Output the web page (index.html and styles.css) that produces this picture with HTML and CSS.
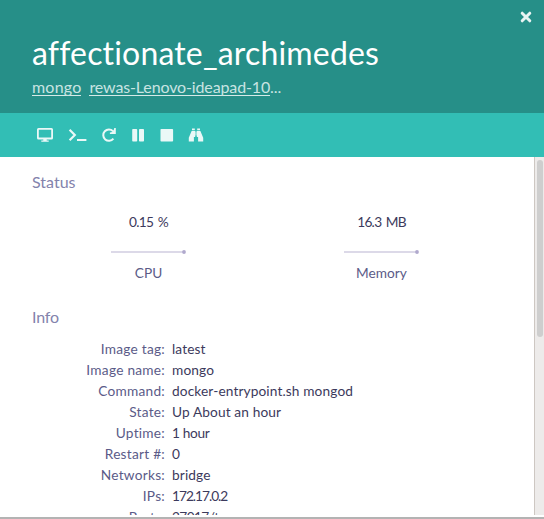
FILE: index.html
```html
<!DOCTYPE html>
<html lang="en">
<head>
<meta charset="utf-8">
<title>affectionate_archimedes</title>
<link rel="stylesheet" href="styles.css">
</head>
<body>
<div class="panel">
  <header class="header">
    <svg class="close" viewBox="0 0 12 12"><path d="M2.2 2.2l7.6 7.6M9.8 2.2l-7.6 7.6"/></svg>
    <h1 class="title">affectionate_archimedes</h1>
    <div class="parents"><a class="mongo">mongo</a><span class="host"><a>rewas-Lenovo-ideapad-10</a>...</span></div>
  </header>
  <nav class="controls">
    <svg class="icon monitor" width="18" height="16" viewBox="0 0 18 16"><rect x="1.9" y="1.9" width="14.2" height="9.6" rx=".6" fill="none" stroke="currentColor" stroke-width="1.8"/><path d="M7.3 12h3.4v1.5h2v1.3H5.3v-1.3h2z"/></svg>
    <svg class="icon terminal" width="20" height="16" viewBox="0 0 20 16"><path d="M1.6 2.8l5.2 5.2-5.2 5.2" fill="none" stroke="currentColor" stroke-width="2.2"/><path d="M9 12h9.4v2H9z"/></svg>
    <svg class="icon restart" width="16" height="16" viewBox="0 0 16 16"><path d="M12.4 11.7A5.7 5.7 0 1 1 12 4.1" fill="none" stroke="currentColor" stroke-width="2"/><path d="M14.8 1v6H8.9V5.6l1.5-.3 2.3-2.2.6-2.1z"/></svg>
    <svg class="icon pause" width="14" height="16" viewBox="0 0 14 16"><rect x="1.2" y="2" width="5" height="12.6" rx=".8"/><rect x="8" y="2" width="5" height="12.6" rx=".8"/></svg>
    <svg class="icon stop" width="14" height="16" viewBox="0 0 14 16"><rect x=".5" y="2" width="12.6" height="12.6" rx=".8"/></svg>
    <svg class="icon binoculars" width="16" height="16" viewBox="0 0 16 16"><path d="M4 1.4h2.8v1.8H4zM9.2 1.4H12v1.8H9.2zM3.6 4h3.6v6H5.9v4.4H.8v-3.6zM8.8 4h3.6l2.8 6.8v3.6h-5.1V10H8.8zM7.6 4.6h.8v4h-.8z"/></svg>
  </nav>
  <main class="content">
    <section>
      <h2 class="heading">Status</h2>
      <div class="metrics">
        <div class="metric"><div class="value">0.15 %</div><svg class="spark" width="76" height="6" viewBox="0 0 76 6"><path d="M0 3h73" stroke="#dcd9e8" stroke-width="2"/><circle cx="73" cy="3" r="1.9" fill="#b0a9cd"/></svg><div class="label">CPU</div></div>
        <div class="metric"><div class="value">16.3 MB</div><svg class="spark" width="76" height="6" viewBox="0 0 76 6"><path d="M0 3h73" stroke="#dcd9e8" stroke-width="2"/><circle cx="73" cy="3" r="1.9" fill="#b0a9cd"/></svg><div class="label">Memory</div></div>
      </div>
    </section>
    <section>
      <h2 class="heading info-heading">Info</h2>
      <dl class="info">
        <dt>Image tag:</dt><dd>latest</dd>
        <dt>Image name:</dt><dd>mongo</dd>
        <dt>Command:</dt><dd>docker-entrypoint.sh mongod</dd>
        <dt>State:</dt><dd>Up About an hour</dd>
        <dt>Uptime:</dt><dd class="uptime">1 hour</dd>
        <dt>Restart #:</dt><dd>0</dd>
        <dt>Networks:</dt><dd>bridge</dd>
        <dt>IPs:</dt><dd class="ip">172.17.0.2</dd>
        <dt>Ports:</dt><dd class="ports">27017/tcp</dd>
      </dl>
    </section>
    <div class="scrollbar"><div class="thumb"></div></div>
  </main>
  <div class="edge"></div>
</div>
</body>
</html>
```
FILE: styles.css
```css
* { box-sizing: border-box; }
body { margin: 0; overflow: hidden; font-family: Lato, sans-serif; font-variant-ligatures: none; background: #fff; color: #3c3a5c; }
h1, h2, dl, dd { margin: 0; font-weight: 400; }
.panel { width: 544px; height: 519px; display: flex; flex-direction: column; }
.header { position: relative; flex: none; height: 113px; padding: 33px 32px 0; background: #268f88; color: #fff; }
.title { font-size: 32px; line-height: 40px; letter-spacing: .17px; white-space: nowrap; }
.close { position: absolute; left: 520px; top: 11px; width: 12px; height: 12px; fill: none; stroke: #e9f4f3; stroke-width: 3; stroke-linecap: round; }
.parents { display: flex; gap: 8px; margin-top: 4px; font-size: 16px; line-height: 20px; color: #c9e4e2; }
.parents a { display: inline-block; height: 19px; border-bottom: 1px solid #d6eae8; }
.mongo { letter-spacing: .2px; }
.host { letter-spacing: -.13px; }
.controls { flex: none; height: 44px; background: #32beb5; display: flex; align-items: center; padding-left: 36px; color: #eaf8f7; }
.icon { fill: currentColor; }
.terminal { margin-left: 14px; }
.restart { margin-left: 13px; }
.pause { margin-left: 14px; }
.stop { margin-left: 15px; }
.binoculars { margin-left: 14px; }
.content { position: relative; flex: none; height: 358px; overflow: hidden; padding: 15px 10px 0 32px; }
.heading { font-size: 16px; line-height: 20px; color: #8383ac; }
.metrics { display: flex; padding-top: 20px; }
.metric { width: 233px; display: flex; flex-direction: column; align-items: center; font-size: 13.7px; line-height: 20px; }
.value { letter-spacing: -.7px; word-spacing: 1.5px; }
.spark { margin: 17px 0 8px; }
.info-heading { margin-top: 24px; letter-spacing: -.2px; }
.label { color: #5b5b88; }
.info { display: grid; grid-template-columns: 133px 1fr; column-gap: 7px; grid-auto-rows: 21px; margin-top: 11px; font-size: 13.7px; line-height: 21px; }
.info dt { text-align: right; color: #5b5b88; letter-spacing: .25px; }
.info dd { letter-spacing: .12px; }
.info .uptime { letter-spacing: -.35px; }
.info .ip { letter-spacing: -1px; }
.info .ports { letter-spacing: -.6px; }
.scrollbar { position: absolute; right: 0; top: 0; width: 10px; height: 358px; background: #edebea; border-left: 1px solid #cdc7c2; }
.thumb { width: 6px; height: 177px; margin: 3px 0 0 2px; border-radius: 3px; background: #cecece; }
.edge { height: 2px; margin-top: 2px; background: #b3b3b3; }
```
